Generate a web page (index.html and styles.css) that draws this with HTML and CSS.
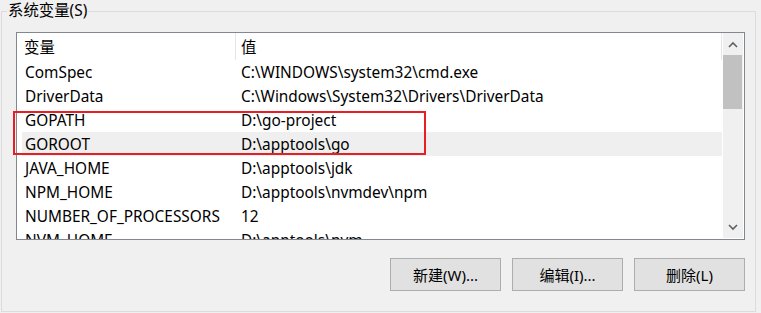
FILE: index.html
```html
<!DOCTYPE html>
<html lang="zh-CN">
<head>
    <meta charset="UTF-8">
    <title>系统变量</title>
    <link rel="stylesheet" href="styles.css">
</head>
<body>
<div class="group">
    <div class="group-title">系统变量(S)</div>
    <div class="listview">
        <div class="list-main">
            <div class="list-header">
                <div class="head-name">变量</div>
                <div class="head-value">值</div>
            </div>
            <ul class="rows">
                <li><span class="name">ComSpec</span><span class="value">C:\WINDOWS\system32\cmd.exe</span></li>
                <li><span class="name">DriverData</span><span class="value">C:\Windows\System32\Drivers\DriverData</span></li>
                <li><span class="name">GOPATH</span><span class="value">D:\go-project</span></li>
                <li class="hover"><span class="name">GOROOT</span><span class="value">D:\apptools\go</span></li>
                <li><span class="name">JAVA_HOME</span><span class="value">D:\apptools\jdk</span></li>
                <li><span class="name">NPM_HOME</span><span class="value">D:\apptools\nvmdev\npm</span></li>
                <li><span class="name">NUMBER_OF_PROCESSORS</span><span class="value">12</span></li>
                <li><span class="name">NVM_HOME</span><span class="value">D:\apptools\nvm</span></li>
            </ul>
        </div>
        <div class="scrollbar">
            <div class="sb-btn">
                <svg width="10" height="7" viewBox="0 0 10 7"><polyline points="1,6 5,2 9,6" fill="none" stroke="#606060" stroke-width="1.6"/></svg>
            </div>
            <div class="sb-track">
                <div class="sb-thumb"></div>
            </div>
            <div class="sb-btn">
                <svg width="10" height="7" viewBox="0 0 10 7"><polyline points="1,1 5,5 9,1" fill="none" stroke="#606060" stroke-width="1.6"/></svg>
            </div>
        </div>
    </div>
    <div class="buttons">
        <button class="btn">新建(W)...</button>
        <button class="btn">编辑(I)...</button>
        <button class="btn">删除(L)</button>
    </div>
    <!-- 标注框 -->
    <div class="mark"></div>
</div>
</body>
</html>
```

FILE: styles.css
```css
*{margin: 0;padding: 0;list-style: none;box-sizing: border-box;}
body{background: #f0f0f0;font-family: "Noto Sans", "Noto Sans CJK SC", sans-serif;font-size: 15px;color: #000;}
.group{position: relative;margin: 11px 5px 0 1px;border: 1px solid #dcdcdc;padding: 0 10px 20px 14px;}
.group-title{width: fit-content;margin: -12px 0 0 -9px;padding: 0 1px;height: 22px;line-height: 22px;background: #f0f0f0;font-size: 15.4px;}
.listview{display: flex;margin-top: 10px;height: 208px;border: 1px solid #828790;background: #fff;overflow: hidden;font-size: 15.4px;}
.list-main{width: 706px;flex: none;}
.list-header{display: flex;height: 27px;line-height: 25px;padding-top: 2px;}
.head-name{width: 219px;padding-left: 7px;border-right: 1px solid #e5e5e5;margin-top: -2px;padding-top: 2px;}
.head-value{width: 486px;padding-left: 5px;border-right: 1px solid #e5e5e5;margin-top: -2px;padding-top: 2px;}
.rows li{display: flex;height: 24px;line-height: 24px;padding-top: 1px;margin: 0 1px 0 5px;white-space: nowrap;}
.rows li.hover{background: #efefef;}
.rows .name{width: 219px;padding-left: 3px;}
.scrollbar{width: 20px;flex: none;display: flex;flex-direction: column;background: #f0f0f0;margin-bottom: 1px;}
.sb-btn{height: 22px;display: flex;align-items: center;justify-content: center;}
.sb-track{flex: 1;}
.sb-thumb{height: 54px;margin: 0 1px 0 0;background: #c1c1c1;}
.buttons{display: flex;justify-content: flex-end;gap: 11px;margin-top: 18px;}
.btn{width: 111px;height: 33px;border: 1px solid #adadad;background: #e1e1e1;font-family: inherit;font-size: 15px;color: #000;}
.mark{position: absolute;left: 11px;top: 99px;width: 413px;height: 44px;border: 2px solid #e81e25;}
```
